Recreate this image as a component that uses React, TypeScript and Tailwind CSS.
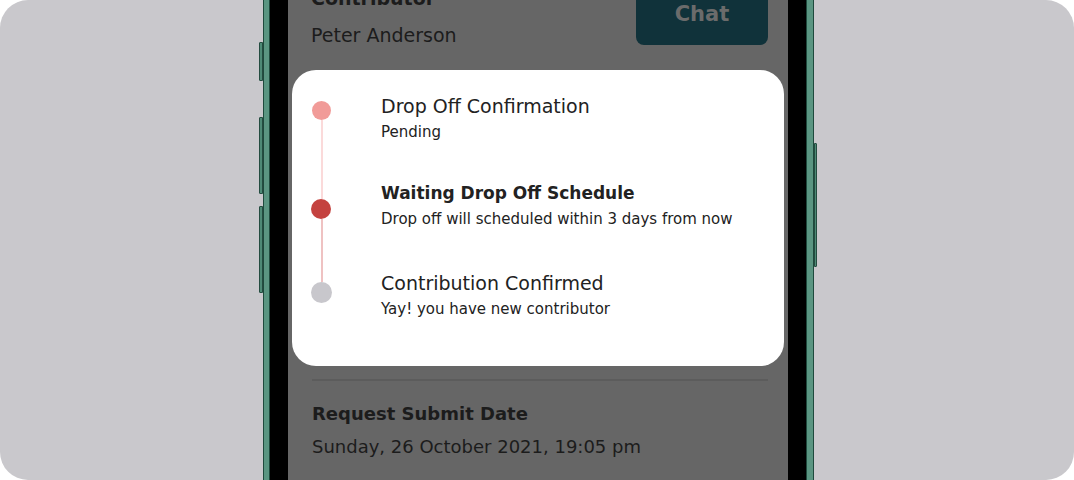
import React from 'react';

const font = { fontFamily: '"DejaVu Sans", "Noto Sans", sans-serif' };

type Step = {
  title: string;
  note: string;
  bold?: boolean;
  extra?: string;
};

const steps: Step[] = [
  { title: 'Drop Off Confirmation', note: 'Pending' },
  { title: 'Waiting Drop Off Schedule', note: 'Drop off will scheduled within 3 days from now', bold: true },
  { title: 'Contribution Confirmed', note: 'Yay! you have new contributor', extra: 'mt-[3px]' },
];

function Timeline() {
  return (
    <div className="mx-[4px] mt-[21px] flex rounded-[24px] bg-white pl-[19px] pt-[23px] pb-[44px]">
      {/* dots and rail */}
      <div className="flex w-[20px] flex-col items-center pt-[8px]">
        <div className="h-[19px] w-[19px] rounded-full bg-[#f19b98]" />
        <div className="h-[79px] w-[2px] translate-x-[1px] bg-[#fbdada]" />
        <div className="h-[20px] w-[20px] rounded-full bg-[#c4423f]" />
        <div className="h-[63px] w-[2px] translate-x-[1px] bg-[#efc2c2]" />
        <div className="h-[21px] w-[21px] rounded-full bg-[#c8c7cc]" />
      </div>
      <div className="ml-[50px] flex flex-col gap-[35px] text-[#222]">
        {steps.map((s) => (
          <div key={s.title} className={`flex flex-col ${s.extra ?? ''}`}>
            <div className={s.bold ? 'text-[17px] leading-[26px] font-bold' : 'text-[19px] leading-[26px]'}>
              {s.title}
            </div>
            <div className="text-[15px] leading-[26px]">{s.note}</div>
          </div>
        ))}
      </div>
    </div>
  );
}

function PhoneScreen() {
  return (
    <div className="flex h-[480px] w-[500px] flex-col overflow-hidden bg-[#666666] text-[#1c1c1c]">
      <div className="-mt-[16px] flex items-start justify-between pl-[23px] pr-[20px]">
        <div className="flex flex-col">
          <div className="text-[19px] font-bold leading-[28px]">Contributor</div>
          <div className="mt-[9px] text-[19px] leading-[28px]">Peter Anderson</div>
        </div>
        <div className="flex h-[61px] w-[132px] items-end justify-center rounded-b-[8px] bg-[#10323a] pb-[15px] text-[21px] font-semibold text-[#6b6b6b]">
          Chat
        </div>
      </div>
      <Timeline />
      <div className="ml-[24px] mr-[20px] mt-[13px] h-[2px] bg-[#5c5c5c]" />
      <div className="mt-[20px] pl-[24px] text-[18px] font-bold leading-[26px]">Request Submit Date</div>
      <div className="mt-[6px] pl-[24px] text-[18px] leading-[28px]">Sunday, 26 October 2021, 19:05 pm</div>
    </div>
  );
}

export default function App() {
  return (
    <div className="h-[480px] w-[1074px] bg-white" style={font}>
      <div className="flex h-full w-full justify-center overflow-hidden rounded-[28px] bg-[#c9c8cc]">
        <div className="ml-[2px] flex">
          {/* left side keys */}
          <div className="flex w-[4px] flex-col">
            <div className="mt-[42px] h-[39px] rounded-l-[1px] border border-[#244c40] bg-[#4e8a76]" />
            <div className="mt-[36px] h-[77px] rounded-l-[1px] border border-[#244c40] bg-[#4e8a76]" />
            <div className="mt-[12px] h-[87px] rounded-l-[1px] border border-[#244c40] bg-[#4e8a76]" />
          </div>
          <div className="w-[7px] border-x border-[#1f4a3d] bg-[#5b9682]" />
          <div className="w-[18px] bg-black" />
          <PhoneScreen />
          <div className="w-[18px] bg-black" />
          <div className="w-[8px] border-x border-[#1f4a3d] bg-[#5b9682]" />
          {/* right side key */}
          <div className="flex w-[3px] flex-col">
            <div className="mt-[143px] h-[124px] rounded-r-[1px] border border-[#244c40] bg-[#4e8a76]" />
          </div>
        </div>
      </div>
    </div>
  );
}
